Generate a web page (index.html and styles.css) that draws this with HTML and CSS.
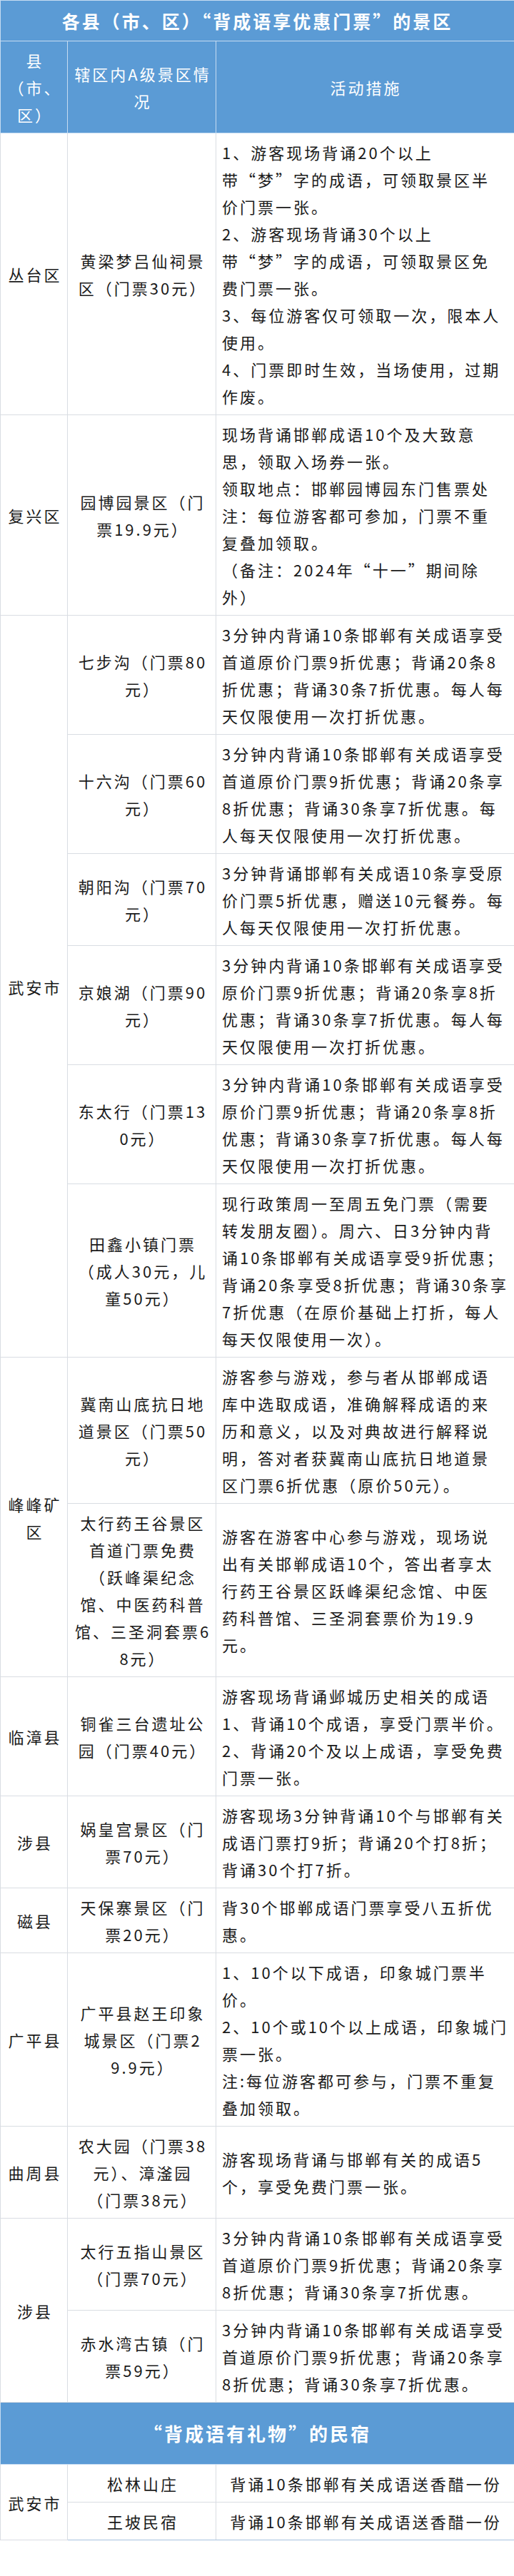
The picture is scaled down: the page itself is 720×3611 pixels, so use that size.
FILE: index.html
```html
<!DOCTYPE html>
<html lang="zh-CN">
<head>
<meta charset="utf-8">
<title>背成语享优惠门票</title>
<link rel="stylesheet" href="styles.css">
</head>
<body>
<table class="sheet">
  <colgroup>
    <col class="c-county">
    <col class="c-spot">
    <col class="c-act">
  </colgroup>
  <tbody>
    <tr>
      <td class="title" colspan="3">各县（市、区）“背成语享优惠门票”的景区</td>
    </tr>
    <tr class="head">
      <td class="county">县<br>（市、<br>区）</td>
      <td class="spot">辖区内A级景区情<br>况</td>
      <td class="act center">活动措施</td>
    </tr>
    <tr>
      <td class="county">丛台区</td>
      <td class="spot">黄梁梦吕仙祠景<br>区（门票30元）</td>
      <td class="act">1、游客现场背诵20个以上<br>带“梦”字的成语，可领取景区半<br>价门票一张。<br>2、游客现场背诵30个以上<br>带“梦”字的成语，可领取景区免<br>费门票一张。<br>3、每位游客仅可领取一次，限本人<br>使用。<br>4、门票即时生效，当场使用，过期<br>作废。</td>
    </tr>
    <tr>
      <td class="county">复兴区</td>
      <td class="spot">园博园景区（门<br>票19.9元）</td>
      <td class="act">现场背诵邯郸成语10个及大致意<br>思，领取入场券一张。<br>领取地点：邯郸园博园东门售票处<br>注：每位游客都可参加，门票不重<br>复叠加领取。<br>（备注：2024年“十一”期间除<br>外）</td>
    </tr>
    <tr>
      <td class="county" rowspan="6">武安市</td>
      <td class="spot">七步沟（门票80<br>元）</td>
      <td class="act">3分钟内背诵10条邯郸有关成语享受<br>首道原价门票9折优惠；背诵20条8<br>折优惠；背诵30条7折优惠。每人每<br>天仅限使用一次打折优惠。</td>
    </tr>
    <tr>
      <td class="spot">十六沟（门票60<br>元）</td>
      <td class="act">3分钟内背诵10条邯郸有关成语享受<br>首道原价门票9折优惠；背诵20条享<br>8折优惠；背诵30条享7折优惠。每<br>人每天仅限使用一次打折优惠。</td>
    </tr>
    <tr>
      <td class="spot">朝阳沟（门票70<br>元）</td>
      <td class="act">3分钟背诵邯郸有关成语10条享受原<br>价门票5折优惠，赠送10元餐券。每<br>人每天仅限使用一次打折优惠。</td>
    </tr>
    <tr>
      <td class="spot">京娘湖（门票90<br>元）</td>
      <td class="act">3分钟内背诵10条邯郸有关成语享受<br>原价门票9折优惠；背诵20条享8折<br>优惠；背诵30条享7折优惠。每人每<br>天仅限使用一次打折优惠。</td>
    </tr>
    <tr>
      <td class="spot">东太行（门票13<br>0元）</td>
      <td class="act">3分钟内背诵10条邯郸有关成语享受<br>原价门票9折优惠；背诵20条享8折<br>优惠；背诵30条享7折优惠。每人每<br>天仅限使用一次打折优惠。</td>
    </tr>
    <tr>
      <td class="spot">田鑫小镇门票<br>（成人30元，儿<br>童50元）</td>
      <td class="act">现行政策周一至周五免门票（需要<br>转发朋友圈）。周六、日3分钟内背<br>诵10条邯郸有关成语享受9折优惠；<br>背诵20条享受8折优惠；背诵30条享<br>7折优惠（在原价基础上打折，每人<br>每天仅限使用一次）。</td>
    </tr>
    <tr>
      <td class="county" rowspan="2">峰峰矿<br>区</td>
      <td class="spot">冀南山底抗日地<br>道景区（门票50<br>元）</td>
      <td class="act">游客参与游戏，参与者从邯郸成语<br>库中选取成语，准确解释成语的来<br>历和意义，以及对典故进行解释说<br>明，答对者获冀南山底抗日地道景<br>区门票6折优惠（原价50元）。</td>
    </tr>
    <tr>
      <td class="spot">太行药王谷景区<br>首道门票免费<br>（跃峰渠纪念<br>馆、中医药科普<br>馆、三圣洞套票6<br>8元）</td>
      <td class="act">游客在游客中心参与游戏，现场说<br>出有关邯郸成语10个，答出者享太<br>行药王谷景区跃峰渠纪念馆、中医<br>药科普馆、三圣洞套票价为19.9<br>元。</td>
    </tr>
    <tr>
      <td class="county">临漳县</td>
      <td class="spot">铜雀三台遗址公<br>园（门票40元）</td>
      <td class="act">游客现场背诵邺城历史相关的成语<br>1、背诵10个成语，享受门票半价。<br>2、背诵20个及以上成语，享受免费<br>门票一张。</td>
    </tr>
    <tr>
      <td class="county">涉县</td>
      <td class="spot">娲皇宫景区（门<br>票70元）</td>
      <td class="act">游客现场3分钟背诵10个与邯郸有关<br>成语门票打9折；背诵20个打8折；<br>背诵30个打7折。</td>
    </tr>
    <tr>
      <td class="county">磁县</td>
      <td class="spot">天保寨景区（门<br>票20元）</td>
      <td class="act">背30个邯郸成语门票享受八五折优<br>惠。</td>
    </tr>
    <tr>
      <td class="county">广平县</td>
      <td class="spot">广平县赵王印象<br>城景区（门票2<br>9.9元）</td>
      <td class="act">1、10个以下成语，印象城门票半<br>价。<br>2、10个或10个以上成语，印象城门<br>票一张。<br>注:每位游客都可参与，门票不重复<br>叠加领取。</td>
    </tr>
    <tr>
      <td class="county">曲周县</td>
      <td class="spot">农大园（门票38<br>元）、漳滏园<br>（门票38元）</td>
      <td class="act">游客现场背诵与邯郸有关的成语5<br>个，享受免费门票一张。</td>
    </tr>
    <tr>
      <td class="county" rowspan="2">涉县</td>
      <td class="spot">太行五指山景区<br>（门票70元）</td>
      <td class="act">3分钟内背诵10条邯郸有关成语享受<br>首道原价门票9折优惠；背诵20条享<br>8折优惠；背诵30条享7折优惠。</td>
    </tr>
    <tr>
      <td class="spot">赤水湾古镇（门<br>票59元）</td>
      <td class="act">3分钟内背诵10条邯郸有关成语享受<br>首道原价门票9折优惠；背诵20条享<br>8折优惠；背诵30条享7折优惠。</td>
    </tr>
    <tr>
      <td class="title title-2" colspan="3">“背成语有礼物”的民宿</td>
    </tr>
    <tr>
      <td class="county" rowspan="2">武安市</td>
      <td class="spot">松林山庄</td>
      <td class="act center">背诵10条邯郸有关成语送香醋一份</td>
    </tr>
    <tr class="last">
      <td class="spot">王坡民宿</td>
      <td class="act center">背诵10条邯郸有关成语送香醋一份</td>
    </tr>
  </tbody>
</table>
</body>
</html>
```

FILE: styles.css
```css
html, body {
  margin: 0;
  padding: 0;
  background: #ffffff;
}

body {
  font-family: "Noto Sans CJK SC", "Noto Sans", "DejaVu Sans", sans-serif;
  color: #1a1a1a;
}

.sheet {
  width: 720px;
  border-collapse: collapse;
  table-layout: fixed;
}

.c-county { width: 94px; }
.c-spot { width: 208px; }
.c-act { width: 418px; }

.sheet td {
  border: 1px solid #d9dde3;
  font-size: 22px;
  line-height: 38px;
  letter-spacing: 3px;
  vertical-align: middle;
  white-space: nowrap;
  padding: 7px 8px;
}

.sheet td.county {
  text-align: center;
  padding: 7px 1px 7px 4px;
}

.sheet td.spot {
  text-align: center;
  padding: 7px 3px 7px 6px;
}

.sheet td.act {
  text-align: left;
  padding: 7px 6px 7px 8px;
}

.sheet td.act.center {
  text-align: center;
}

.sheet td.title {
  background: #5b9bd5;
  color: #ffffff;
  font-weight: 700;
  font-size: 25px;
  letter-spacing: 3px;
  line-height: 42px;
  text-align: center;
  padding: 7px 0;
  border-color: #c6dcf1;
}

.sheet td.title-2 {
  font-size: 26px;
  padding: 22px 0;
}

.sheet tr.head td {
  background: #5b9bd5;
  color: #ffffff;
  border-color: #c6dcf1;
}

.sheet tr.last td {
  border-bottom-color: #a7c2df;
}
```
